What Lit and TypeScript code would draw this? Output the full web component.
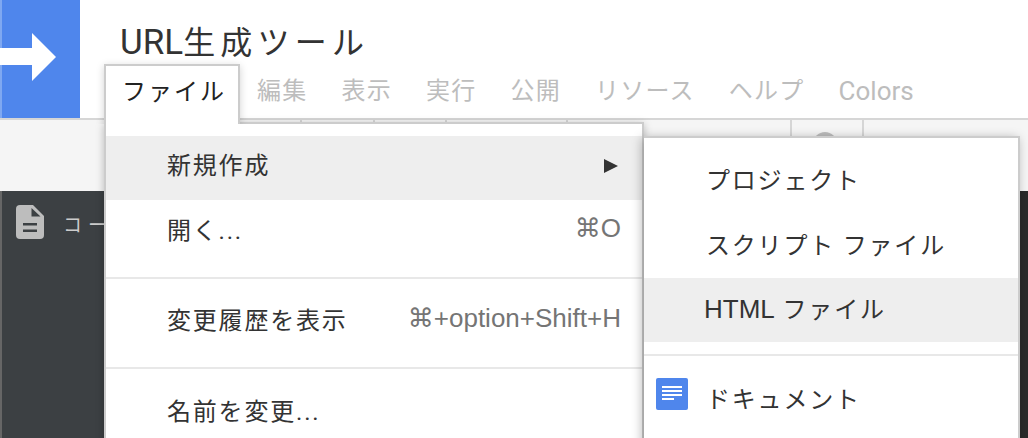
import { html, css, LitElement, svg } from 'lit'
import { customElement } from 'lit/decorators.js'

@customElement('app-root')
export class AppRoot extends LitElement {
  static styles = css`
    :host {
      display: block;
      width: 1028px;
      height: 438px;
      position: relative;
      overflow: hidden;
      background: #fff;
      font-family: "Roboto", "Noto Sans CJK JP", sans-serif;
      color: #333;
    }

    .header {
      height: 118px;
      display: flex;
      border-bottom: 2px solid #d6d6d6;
      background: #fff;
    }
    .logo {
      width: 78px;
      border-left: 2px solid #7fa8f1;
      background: #4f86ec;
      position: relative;
      flex: none;
    }
    .logo svg {
      position: absolute;
      left: -2px;
      top: 33px;
    }
    .titles {
      padding-left: 40px;
      display: flex;
      flex-direction: column;
    }
    .title {
      font-size: 35px;
      line-height: 38px;
      margin-top: 24px;
      color: #333;
      white-space: nowrap;
    }
    .title span {
      font-size: 32px;
      letter-spacing: 5.2px;
    }
    .menubar {
      display: flex;
      margin-top: 12px;
      margin-left: 137px;
      font-size: 24px;
      line-height: 34px;
      color: #bdbdbd;
      gap: 34px;
      letter-spacing: 1.25px;
      white-space: nowrap;
    }
    .menubar .colors {
      font-size: 26px;
      letter-spacing: 0;
    }
    .toolbar {
      height: 71px;
      background: #f5f5f5;
      position: relative;
    }
    .tick {
      position: absolute;
      top: 0;
      width: 2px;
      height: 2px;
      background: #d6d6d6;
    }
    .sep {
      position: absolute;
      top: 0;
      width: 2px;
      height: 17px;
      background: #d6d6d6;
    }
    .circle {
      position: absolute;
      left: 813px;
      top: 12px;
      width: 24px;
      height: 24px;
      border-radius: 50%;
      background: #bdbdbd;
    }
    .editor {
      height: 247px;
      background: #3c4043;
      border-left: 2px solid #666;
      position: relative;
      color: #ccc;
    }
    .editor svg {
      position: absolute;
      left: 14px;
      top: 14px;
    }
    .editor span {
      position: absolute;
      left: 61px;
      top: 20px;
      font-size: 19px;
      line-height: 30px;
      letter-spacing: 6px;
      white-space: nowrap;
    }
    .edge {
      position: absolute;
      left: 1020px;
      top: 191px;
      width: 8px;
      height: 247px;
      background: #2b2b2b;
    }

    .file-tab {
      position: absolute;
      left: 104px;
      top: 64px;
      width: 136px;
      height: 60px;
      box-sizing: border-box;
      border: 2px solid #ccc;
      border-bottom: none;
      background: #fff;
      padding-left: 16px;
      font-size: 24px;
      line-height: 52px;
      color: #222;
      z-index: 3;
      box-shadow: 0 2px 8px rgba(0, 0, 0, 0.18);
      clip-path: inset(-10px -10px 0 -10px);
      white-space: nowrap;
      letter-spacing: 2px;
    }

    .menu {
      position: absolute;
      background: #fff;
      box-sizing: border-box;
      box-shadow: 0 2px 8px rgba(0, 0, 0, 0.25);
      font-size: 24px;
      color: #333;
    }
    .main {
      left: 104px;
      top: 122px;
      width: 540px;
      height: 330px;
      border: 2px solid #ccc;
      padding-top: 12px;
      z-index: 2;
    }
    .sub {
      left: 644px;
      top: 136px;
      width: 376px;
      height: 320px;
      border: 2px solid #ccc;
      border-left: none;
      padding-top: 12px;
      z-index: 4;
      box-shadow: -2px 2px 10px rgba(0, 0, 0, 0.28);
    }
    .item {
      height: 64px;
      box-sizing: border-box;
      padding: 0 21px 8px 61px;
      display: flex;
      align-items: center;
      justify-content: space-between;
      white-space: nowrap;
      letter-spacing: 1.8px;
    }
    .sub .item {
      padding-left: 62px;
    }
    .item.hl {
      background: #eee;
    }
    .main .hl {
      padding-bottom: 10px;
    }
    .item.open {
      height: 77px;
      padding-bottom: 20px;
    }
    .item.history {
      height: 88px;
      padding-bottom: 10px;
    }
    .item.rename {
      height: 88px;
    }
    .item.script,
    .sub .hl {
      padding-bottom: 6px;
    }
    .item.doc {
      height: 84px;
      padding-bottom: 2px;
      position: relative;
    }
    .doc svg {
      position: absolute;
      left: 12px;
      top: 22px;
    }
    .rule {
      height: 2px;
      background: #e8e8e8;
    }
    .gap {
      height: 12px;
    }
    .keys {
      color: #757575;
      font-family: "Liberation Sans", "DejaVu Sans", "Noto Sans CJK JP", sans-serif;
      font-size: 26px;
      letter-spacing: 0;
    }
    .arrow {
      width: 0;
      height: 0;
      border-left: 14px solid #333;
      border-top: 7px solid transparent;
      border-bottom: 7px solid transparent;
      margin: 0 3px 0 0;
      position: relative;
      top: 3px;
    }
    .latin {
      font-family: "Liberation Sans", sans-serif;
      font-size: 26px;
      letter-spacing: 0;
      margin-left: -2px;
    }
  `

  private logoArrow() {
    return svg`<svg width="58" height="50" viewBox="0 0 58 50"><path fill="#fff" d="M0 15H32V0L56 24 32 48V32H0z"/></svg>`
  }

  private docIcon() {
    return svg`<svg width="32" height="32" viewBox="0 0 32 32"><rect width="32" height="32" rx="2" fill="#4f86ec"/><path fill="#fff" d="M6 8h20v2H6zM6 12h20v2H6zM6 16h20v2H6zM6 20h12v2H6z"/></svg>`
  }

  private fileIcon() {
    return svg`<svg width="28" height="34" viewBox="0 0 28 34"><path fill="#bdbdbd" d="M4 0H17L28 11V30a4 4 0 0 1-4 4H4a4 4 0 0 1-4-4V4a4 4 0 0 1 4-4z"/><path fill="#3c4043" d="M15.500 3V11.500H24.500zM7 18H21V20.500H7zM7 24.500H21V27H7z"/></svg>`
  }

  render() {
    return html`
      <div class="header">
        <div class="logo">${this.logoArrow()}</div>
        <div class="titles">
          <div class="title">URL<span>生成ツール</span></div>
          <div class="menubar">
            <span>編集</span><span>表示</span><span>実行</span><span>公開</span><span>リソース</span><span>ヘルプ</span><span class="colors">Colors</span>
          </div>
        </div>
      </div>
      <div class="toolbar">
        ${[300, 373, 445, 566].map((x) => html`<i class="tick" style="left:${x}px"></i>`)}
        <i class="sep" style="left:790px"></i>
        <i class="sep" style="left:862px"></i>
        <i class="circle"></i>
      </div>
      <div class="editor">${this.fileIcon()}<span>コード</span></div>
      <div class="edge"></div>

      <div class="file-tab">ファイル</div>
      <div class="menu main">
        <div class="item hl"><span>新規作成</span><i class="arrow"></i></div>
        <div class="item open"><span>開く...</span><span class="keys">⌘O</span></div>
        <div class="rule"></div>
        <div class="item history"><span>変更履歴を表示</span><span class="keys">⌘+option+Shift+H</span></div>
        <div class="rule"></div>
        <div class="item rename"><span>名前を変更...</span></div>
      </div>
      <div class="menu sub">
        <div class="item"><span>プロジェクト</span></div>
        <div class="item script"><span>スクリプト ファイル</span></div>
        <div class="item hl"><span><span class="latin">HTML</span> ファイル</span></div>
        <div class="gap"></div>
        <div class="rule"></div>
        <div class="item doc">${this.docIcon()}<span>ドキュメント</span></div>
      </div>
    `
  }
}
